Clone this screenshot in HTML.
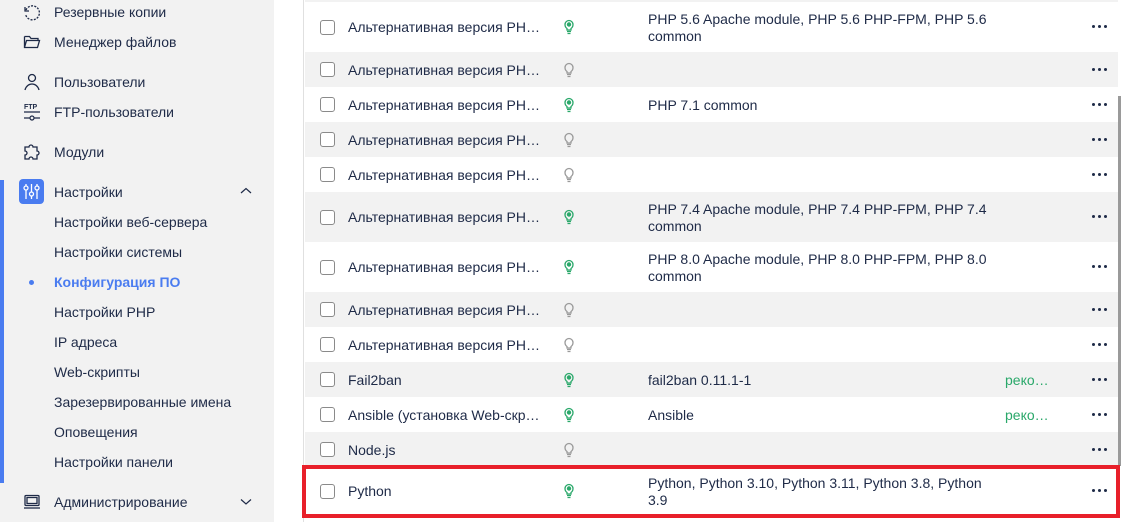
<!DOCTYPE html>
<html><head><meta charset="utf-8"><style>
*{margin:0;padding:0;box-sizing:border-box}
body{width:1122px;height:522px;overflow:hidden;background:#fff;font-family:"Liberation Sans",sans-serif;color:#1e2a47;font-size:14px;position:relative}
.side{position:absolute;left:0;top:0;width:274px;height:522px;background:#f2f2f2}
.bar{position:absolute;left:0;top:180px;width:4px;height:303px;background:#4a7cf0}
.it{position:absolute;left:54px;font-size:14px;line-height:18px;white-space:nowrap;margin-top:-1px}
.ic{position:absolute;left:23px}
.tl{position:absolute;left:303px;top:0;width:1px;height:522px;background:#e0e0e0}
.row{position:absolute;left:305px;width:813px}
.g{background:#f2f2f2}
.cb{position:absolute;left:15px;width:15px;height:15px;border:1.3px solid #8a8a8a;border-radius:3px;background:#fff}
.nm{position:absolute;left:43px;width:196px;white-space:nowrap;overflow:hidden;text-overflow:ellipsis;line-height:18px}
.bl{position:absolute;left:259px}
.vr{position:absolute;left:343px;line-height:17px;white-space:nowrap;margin-top:1px}
.rk{position:absolute;left:700px;color:#2aa86a;line-height:18px}
.dt{position:absolute;left:787px;width:18px;height:4px}
.dt i{position:absolute;top:0;width:3.4px;height:3.4px;border-radius:2px;background:#1e2a47}
</style></head><body>
<div class="side">
<div class="bar"></div>
<svg class="ic" style="top:4px" width="18" height="18" viewBox="0 0 18 18" fill="none" stroke="#1e2a47" stroke-width="1.3"><path d="M3 6A7 7 0 1 1 2.5 10" stroke-dasharray="2 1.3"/><path d="M2 3v4h4"/></svg>
<div class="it" style="top:4px">Резервные копии</div>
<svg class="ic" style="top:34px" width="18" height="16" viewBox="0 0 18 16" fill="none" stroke="#1e2a47" stroke-width="1.3"><path d="M1.5 2.5h5l1.5 2h7v2M1.5 2.5v11h13l2-7h-13l-2 7"/></svg>
<div class="it" style="top:34px">Менеджер файлов</div>
<svg class="ic" style="top:73px" width="18" height="18" viewBox="0 0 18 18" fill="none" stroke="#1e2a47" stroke-width="1.3"><circle cx="9" cy="5" r="3.5"/><path d="M2 17c1-4 4-6 7-6s6 2 7 6"/></svg>
<div class="it" style="top:74px">Пользователи</div>
<svg class="ic" style="top:102px" width="18" height="20" viewBox="0 0 18 20"><text x="1" y="7" font-size="7" font-family="Liberation Sans" font-weight="bold" fill="#1e2a47">FTP</text><path d="M1 10h16M1 16h16" stroke="#1e2a47" stroke-width="1.2"/><circle cx="9" cy="16" r="2" fill="#f2f2f2" stroke="#1e2a47" stroke-width="1.2"/></svg>
<div class="it" style="top:104px">FTP-пользователи</div>
<svg class="ic" style="top:143px" width="18" height="18" viewBox="0 0 18 18" fill="none" stroke="#1e2a47" stroke-width="1.3"><path d="M2 4h4a2 2 0 1 1 4 0h4v4a2 2 0 1 1 0 4v4h-4a2 2 0 1 0-4 0H2v-4a2 2 0 1 0 0-4z"/></svg>
<div class="it" style="top:144px">Модули</div>
<div style="position:absolute;left:19px;top:179px;width:25px;height:25px;border-radius:4px;background:#4a7cf0"></div>
<svg style="position:absolute;left:19px;top:179px" width="25" height="25" viewBox="0 0 25 25" fill="none" stroke="#fff" stroke-width="1.3"><path d="M7 5v15M12.5 5v15M18 5v15"/><circle cx="7" cy="9" r="2" fill="#4a7cf0"/><circle cx="12.5" cy="15" r="2" fill="#4a7cf0"/><circle cx="18" cy="9" r="2" fill="#4a7cf0"/></svg>
<div class="it" style="top:184px">Настройки</div>
<svg style="position:absolute;left:240px;top:187px" width="12" height="8" viewBox="0 0 12 8" fill="none" stroke="#1e2a47" stroke-width="1.2"><path d="M1 6l5-4.5 5 4.5"/></svg>
<div class="it" style="top:214px">Настройки веб-сервера</div>
<div class="it" style="top:244px">Настройки системы</div>
<div style="position:absolute;left:29px;top:280px;width:5px;height:5px;border-radius:3px;background:#4a7cf0"></div>
<div class="it" style="top:274px;color:#4a7cf0;font-weight:bold">Конфигурация ПО</div>
<div class="it" style="top:304px">Настройки PHP</div>
<div class="it" style="top:334px">IP адреса</div>
<div class="it" style="top:364px">Web-скрипты</div>
<div class="it" style="top:394px">Зарезервированные имена</div>
<div class="it" style="top:424px">Оповещения</div>
<div class="it" style="top:454px">Настройки панели</div>
<svg class="ic" style="top:494px" width="18" height="16" viewBox="0 0 18 16" fill="none" stroke="#1e2a47" stroke-width="1.3"><rect x="2" y="1.5" width="14" height="10" rx="1"/><rect x="4" y="3.5" width="10" height="6"/><path d="M1 14h16"/></svg>
<div class="it" style="top:494px">Администрирование</div>
<svg style="position:absolute;left:240px;top:498px" width="12" height="8" viewBox="0 0 12 8" fill="none" stroke="#1e2a47" stroke-width="1.2"><path d="M1 1.5l5 4.5 5-4.5"/></svg>
</div>
<div class="tl"></div>
<div class="row g" style="top:0;height:2px"></div>

<div id="rows"></div>
<div style="position:absolute;left:1118px;top:96px;width:3px;height:370px;background:#9a9a9a"></div>
<div style="position:absolute;left:302px;top:465px;width:818px;height:53px;border:4px solid #e8202a"></div>
<script>
var G='<svg width="10" height="16" viewBox="0 0 10 16" fill="none" stroke="#2aa86a" stroke-width="1.3"><path d="M3 11V9.5C1.5 8.5 1 7 1 5.5a4 4 0 0 1 8 0c0 1.5-.5 3-2 4V11zM3 12.5h4M3.5 14.5h3"/><circle cx="5" cy="5.5" r="2.2" fill="#2aa86a" stroke="none"/></svg>';
var W=G.replace(/#2aa86a/g,'#9a9a9a').replace('<circle cx="5" cy="5.5" r="2.2" fill="#9a9a9a" stroke="none"/>','');
var A='Альтернативная версия PHP 5.6';
var R=[
[2,50,0,A,1,'PHP 5.6 Apache module, PHP 5.6 PHP-FPM, PHP 5.6<br>common',0],
[52,35,1,A,0,'',0],
[87,35,0,A,1,'PHP 7.1 common',0],
[122,35,1,A,0,'',0],
[157,35,0,A,0,'',0],
[192,50,1,A,1,'PHP 7.4 Apache module, PHP 7.4 PHP-FPM, PHP 7.4<br>common',0],
[242,50,0,A,1,'PHP 8.0 Apache module, PHP 8.0 PHP-FPM, PHP 8.0<br>common',0],
[292,35,1,A,0,'',0],
[327,35,0,A,0,'',0],
[362,35,1,'Fail2ban',1,'fail2ban 0.11.1-1',1],
[397,35,0,'Ansible (установка Web-скриптов)',1,'Ansible',1],
[432,35,1,'Node.js',0,'',0],
[467,48,0,'Python',1,'Python, Python 3.10, Python 3.11, Python 3.8, Python<br>3.9',0]];
var h='';
R.forEach(function(r){var t=r[0],ht=r[1],m=ht/2;
var lines=r[5].indexOf('<br>')>=0?2:1;
h+='<div class="row'+(r[2]?' g':'')+'" style="top:'+t+'px;height:'+ht+'px">'+
'<div class="cb" style="top:'+(m-7.5)+'px"></div>'+
'<div class="nm" style="top:'+(m-9)+'px">'+r[3]+'</div>'+
'<div class="bl" style="top:'+(m-8)+'px">'+(r[4]?G:W)+'</div>'+
(r[5]?'<div class="vr" style="top:'+(m-lines*8.5)+'px">'+r[5]+'</div>':'')+
(r[6]?'<div class="rk" style="top:'+(m-9)+'px">реко…</div>':'')+
'<div class="dt" style="top:'+(m-2)+'px"><i style="left:0"></i><i style="left:6px"></i><i style="left:12px"></i></div></div>';});
document.getElementById('rows').innerHTML=h;
</script>
</body></html>
